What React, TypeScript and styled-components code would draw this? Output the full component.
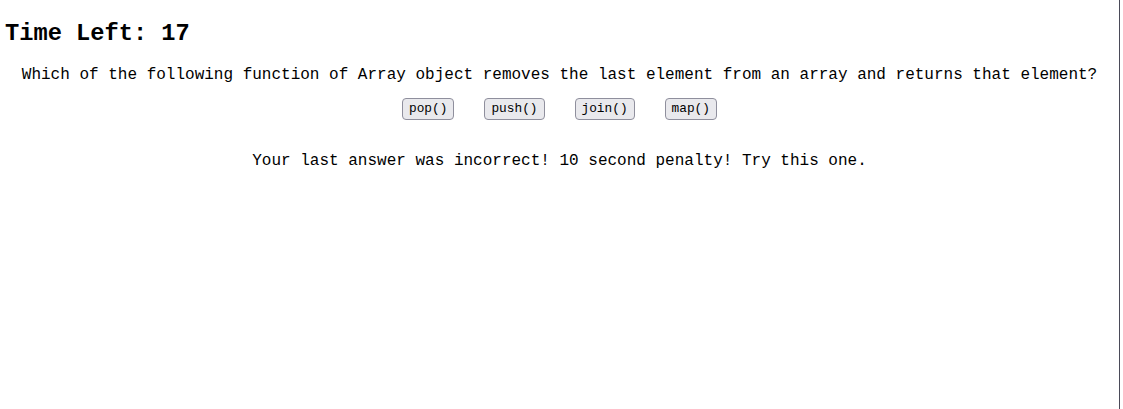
import React from "react";
import styled, { createGlobalStyle } from "styled-components";

const Global = createGlobalStyle`
  html, body { margin: 0; padding: 0; background: #fff; }
  body { font-family: "Liberation Mono", "Courier New", monospace; color: #000; }
`;

const Page = styled.div`
  width: 1120px;
  height: 409px;
  border-right: 1px solid #4a4a58;
  padding: 20px 0 0 0;
  box-sizing: border-box;
`;

const Timer = styled.h1`
  margin: 0 0 0 5px;
  font-family: "Liberation Mono", "Courier New", monospace;
  font-size: 23.7px;
  font-weight: bold;
  line-height: 28px;
`;

const Question = styled.p`
  margin: 18px 0 0 0;
  text-align: center;
  font-size: 16px;
  line-height: 18px;
`;

const Choices = styled.div`
  margin-top: 14px;
  display: flex;
  justify-content: center;
  gap: 30px;
`;

const Choice = styled.button`
  font-family: "Liberation Mono", "Courier New", monospace;
  font-size: 12.8px;
  line-height: 15px;
  padding: 2px 6px 3px 6px;
  background: #e9e9ed;
  border: 1px solid #8f8f9d;
  border-radius: 4px;
  color: #000;
  cursor: pointer;
`;

const Feedback = styled.p`
  margin: 32px 0 0 0;
  text-align: center;
  font-size: 16px;
  line-height: 18px;
`;

export default function App() {
  const choices = ["pop()", "push()", "join()", "map()"];
  return (
    <>
      <Global />
      <Page>
        <Timer>Time Left: 17</Timer>
        <Question>
          Which of the following function of Array object removes the last element from an array and returns that element?
        </Question>
        <Choices>
          {choices.map((c) => (
            <Choice key={c}>{c}</Choice>
          ))}
        </Choices>
        <Feedback>Your last answer was incorrect! 10 second penalty! Try this one.</Feedback>
      </Page>
    </>
  );
}
